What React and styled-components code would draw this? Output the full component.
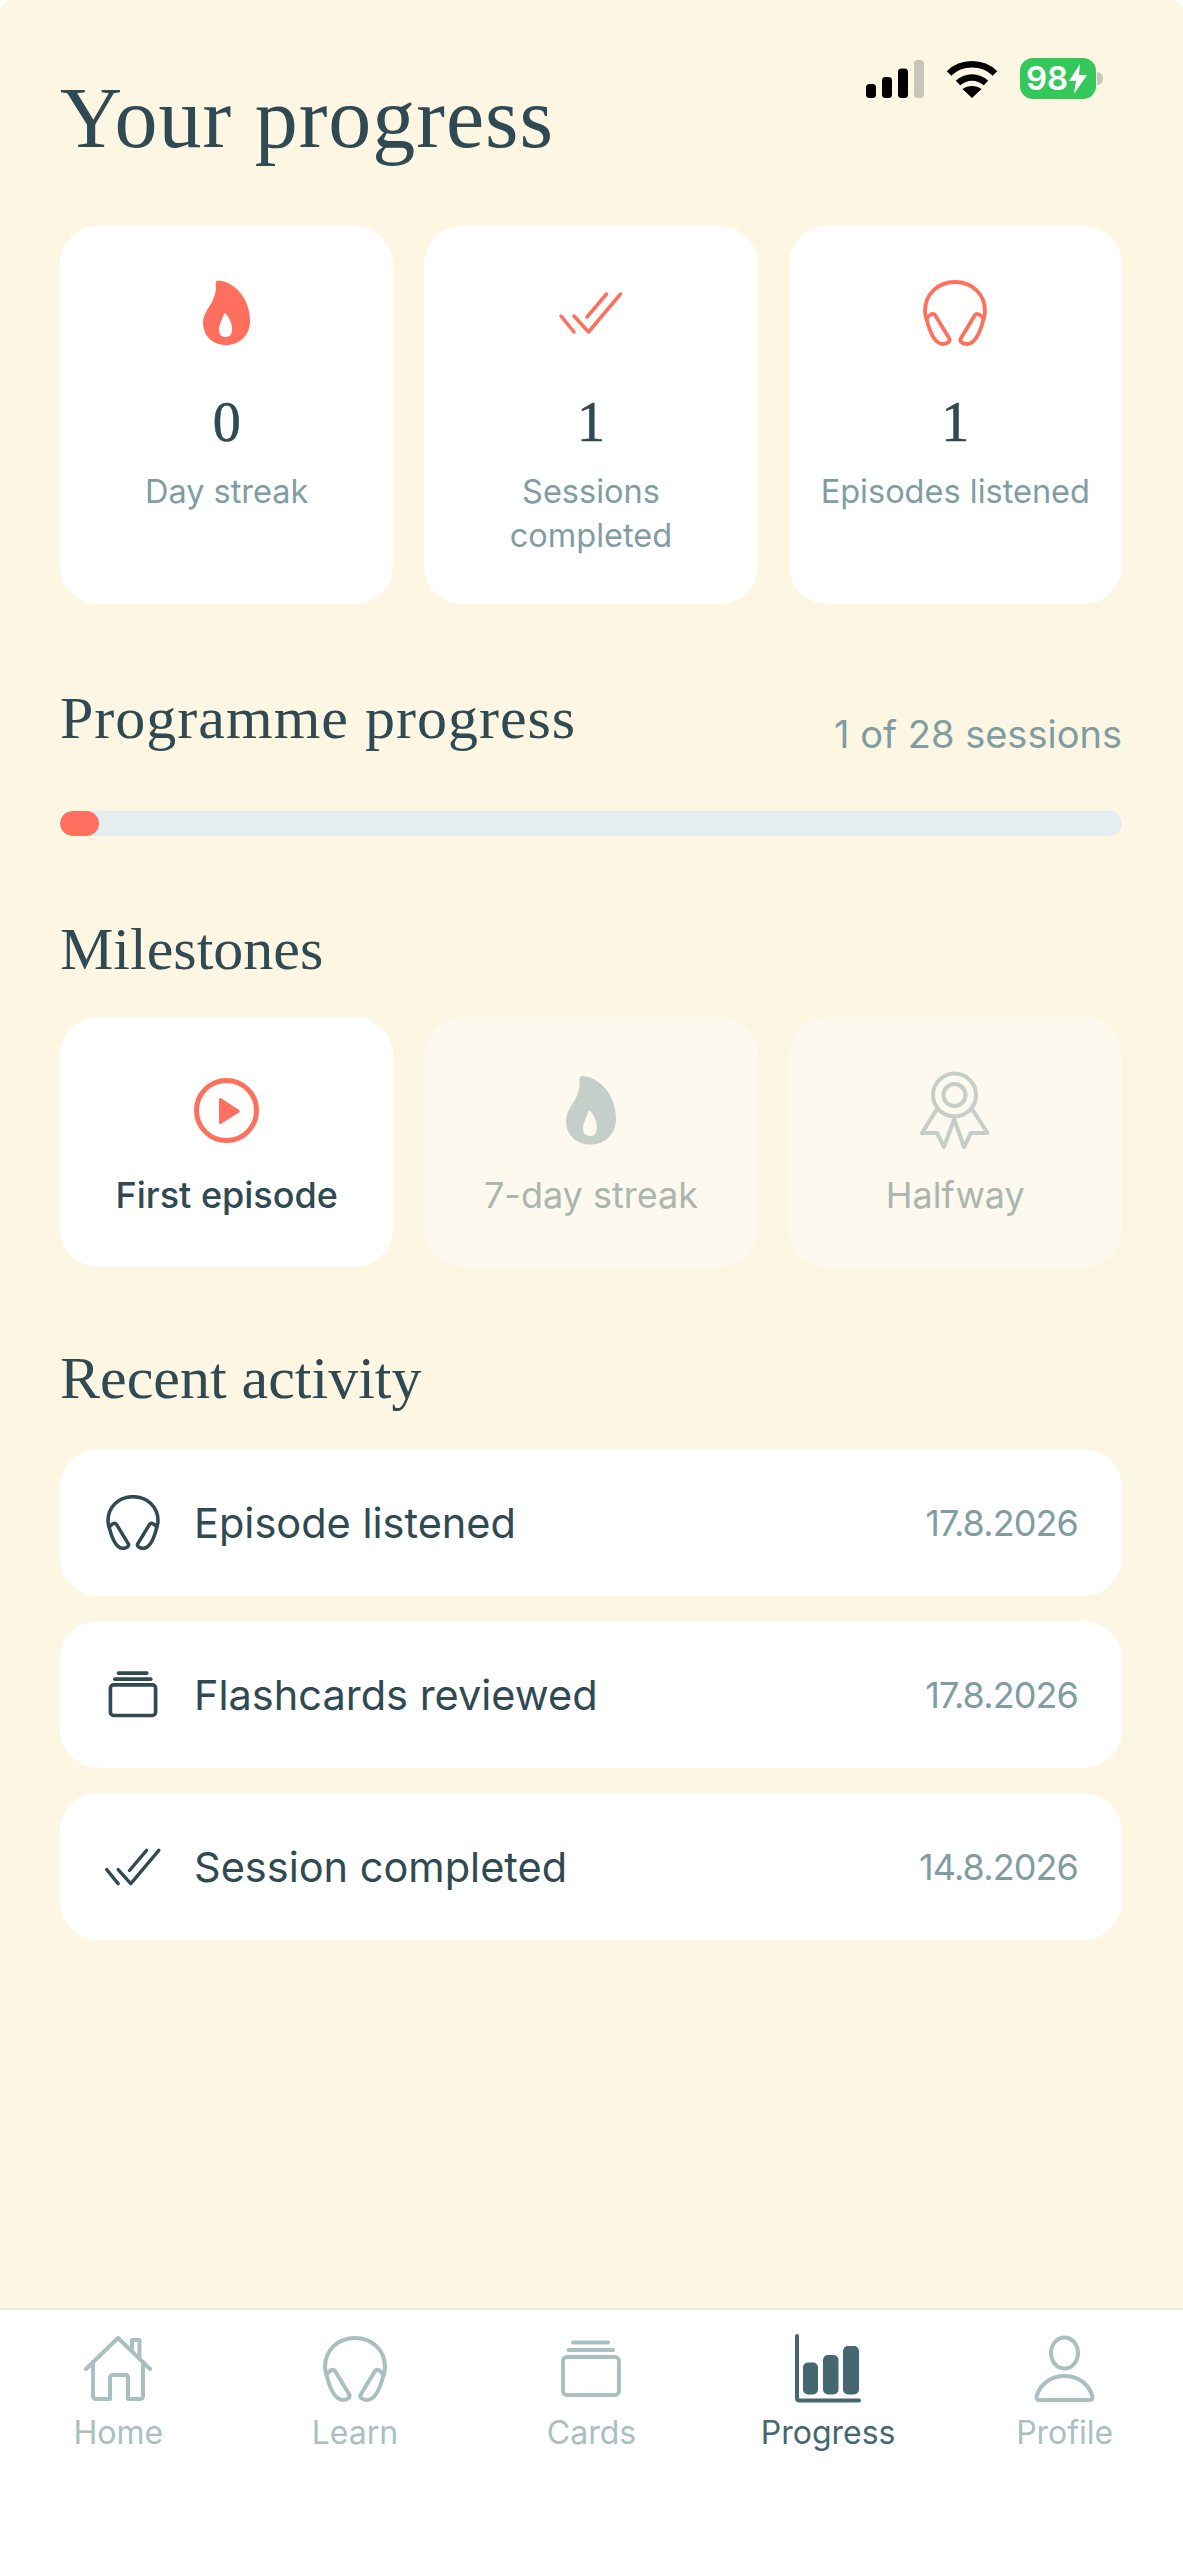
import React from "react";
import styled, { createGlobalStyle } from "styled-components";

const coral = "#FF6F5E";
const ink = "#2F4A52";
const muted = "#7F9DA3";
const navIdle = "#A9BFC2";
const navActive = "#456870";
const lockedIcon = "#C3CFC8";

const serif = `"Liberation Serif", "Times New Roman", serif`;
const sans = `Inter, "Noto Sans", sans-serif`;

const Global = createGlobalStyle`
  html, body {
    margin: 0;
    padding: 0;
    background: #fff;
  }
  * {
    box-sizing: border-box;
  }
`;

const Page = styled.div`
  position: relative;
  width: 1183px;
  height: 2560px;
  display: flex;
  flex-direction: column;
  border-radius: 12px 12px 0 0;
  background: #fdf6e3;
  font-family: ${sans};
  color: ${ink};
  overflow: hidden;
`;

const StatusBar = styled.div`
  position: absolute;
  top: 58px;
  right: 87px;
  display: flex;
  align-items: center;
  gap: 23px;
`;

const Battery = styled.div`
  position: relative;
  width: 76px;
  height: 41px;
  border-radius: 13px;
  background: #34c759;
  color: #fff;
  display: flex;
  align-items: center;
  justify-content: flex-start;
  gap: 1px;
  padding-left: 6px;
  font-size: 33px;
  font-weight: 600;
  line-height: 41px;
  &::after {
    content: "";
    position: absolute;
    right: -7px;
    top: 14px;
    width: 6px;
    height: 13px;
    border-radius: 0 6px 6px 0;
    background: #c9c5b9;
  }
`;

const Main = styled.main`
  flex: 1;
  padding: 0 61px 0 60px;
`;

const Title = styled.h1`
  margin: 0;
  padding-top: 68px;
  font-family: ${serif};
  font-weight: 400;
  font-size: 86px;
  line-height: 100px;
  letter-spacing: 1px;
  color: ${ink};
`;

const CardGrid = styled.div`
  display: grid;
  grid-template-columns: repeat(3, 1fr);
  gap: 31px;
`;

const StatGrid = styled(CardGrid)`
  margin-top: 58px;
`;

const StatCard = styled.div`
  height: 378px;
  padding-top: 54px;
  border-radius: 38px;
  background: #fff;
  display: flex;
  flex-direction: column;
  align-items: center;
`;

const IconSlot = styled.div`
  height: ${p => p.$height}px;
  display: flex;
  align-items: center;
  justify-content: center;
  color: ${p => p.$color};
`;

const StatValue = styled.div`
  margin-top: 47px;
  font-family: ${serif};
  font-size: 56px;
  line-height: 60px;
  -webkit-text-stroke: 0.6px ${ink};
  color: ${ink};
`;

const StatLabel = styled.div`
  margin-top: 18px;
  width: 280px;
  text-align: center;
  font-size: 32.5px;
  line-height: 44px;
  color: ${muted};
`;

const ProgressHead = styled.div`
  margin-top: 79px;
  display: flex;
  justify-content: space-between;
  align-items: flex-end;
`;

const SectionTitle = styled.h2`
  margin: 0;
  font-family: ${serif};
  font-weight: 400;
  font-size: 60px;
  line-height: 70px;
  color: ${ink};
`;

const ProgrammeTitle = styled(SectionTitle)`
  letter-spacing: 1px;
`;

const SessionCount = styled.span`
  margin-bottom: -5px;
  font-size: 38px;
  line-height: 48px;
  color: ${muted};
`;

const Track = styled.div`
  margin-top: 58px;
  height: 25px;
  border-radius: 13px;
  background: #e4edf0;
  overflow: hidden;
`;

const Fill = styled.div`
  height: 100%;
  border-radius: 13px;
  background: ${coral};
`;

const MilestoneTitle = styled(SectionTitle)`
  margin-top: 78px;
`;

const MilestoneGrid = styled(CardGrid)`
  margin-top: 33px;
`;

const MilestoneCard = styled.div`
  height: 250px;
  padding-top: 58px;
  border-radius: 38px;
  background: ${p => (p.$locked ? "#fdf9ee" : "#fff")};
  display: flex;
  flex-direction: column;
  align-items: center;
`;

const MilestoneLabel = styled.div`
  margin-top: 28px;
  font-size: 36px;
  line-height: 44px;
  font-weight: ${p => (p.$locked ? 400 : 500)};
  color: ${p => (p.$locked ? "#aab6ae" : ink)};
`;

const ActivityTitle = styled(SectionTitle)`
  margin-top: 76px;
`;

const ActivityList = styled.div`
  margin-top: 36px;
  display: flex;
  flex-direction: column;
  gap: 25px;
`;

const ActivityRow = styled.div`
  height: 147px;
  padding: 0 44px 0 45px;
  border-radius: 38px;
  background: #fff;
  display: flex;
  align-items: center;
`;

const ActivityIcon = styled.div`
  width: 56px;
  margin-right: 33px;
  display: flex;
  justify-content: center;
  color: ${ink};
`;

const ActivityName = styled.span`
  flex: 1;
  font-size: 41.5px;
  color: ${ink};
`;

const ActivityDate = styled.span`
  font-size: 36px;
  letter-spacing: -0.9px;
  color: ${muted};
`;

const Nav = styled.nav`
  height: 252px;
  padding-top: 25px;
  border-top: 2px solid #e9e9e6;
  background: #fff;
  display: grid;
  grid-template-columns: repeat(5, 1fr);
`;

const NavItem = styled.div`
  display: flex;
  flex-direction: column;
  align-items: center;
  color: ${p => (p.$active ? navActive : navIdle)};
`;

const NavIcon = styled.div`
  height: 68px;
  display: flex;
  align-items: center;
  justify-content: center;
`;

const NavLabel = styled.span`
  margin-top: 8px;
  font-size: 32px;
  line-height: 44px;
`;

const Flame = ({ w = 47, h = 65 }) => (
  <svg width={w} height={h} viewBox="0 0 47 65">
    <path
      fill="currentColor"
      fillRule="evenodd"
      d="M15 .5c-2 0-2.500 2-2.200 4.500.5 6-1 11-3.800 17C5 29 0 35 0 43c0 12 9 22 23 22s24-10 24-24c0-8-2-16-6-23C36 9 25 .5 15 .5ZM21 34c-2 6-5 11-5 16 0 5 3 7 7 7s6-3 6-8c0-6-3-12-6-15-1-1-2-1-2 0Z"
    />
  </svg>
);

const DoubleCheck = ({ w = 64, h = 42, sw = 3.5 }) => (
  <svg width={w} height={h} viewBox="0 0 64 42" fill="none" stroke="currentColor" strokeWidth={sw} strokeLinecap="round" strokeLinejoin="round">
    <path d="M2 24 15 40" />
    <path d="M15 24 29.500 40 61.500 2" />
    <path d="M28 25 47.500 2" />
  </svg>
);

const Headphones = ({ w = 64, h = 66, sw = 3.8 }) => (
  <svg width={w} height={h} viewBox="0 0 64 66" fill="none" stroke="currentColor" strokeWidth={sw} strokeLinecap="round" strokeLinejoin="round">
    <path d="M3.500 39C2.500 36 2 33 2 31 2 14 15 2 32 2s30 12 30 29c0 2-.5 5-1.500 8" />
    <path d="M3.500 39c1.500-3 6-7 8.500-4l14 23c2 3-1 6-6 6-8 0-13-11-16.500-25Z" />
    <path d="M60.500 39c-1.500-3-6-7-8.500-4L38 58c-2 3 1 6 6 6 8 0 13-11 16.500-25Z" />
  </svg>
);

const CardStack = ({ w = 62, h = 58, sw = 4 }) => (
  <svg width={w} height={h} viewBox="0 0 62 58" fill="none" stroke="currentColor" strokeWidth={sw} strokeLinecap="round" strokeLinejoin="round">
    <path d="M13 2.500H48" />
    <path d="M8.500 10H53" />
    <rect x="3" y="17" width="56" height="38" rx="4" />
  </svg>
);

const PlayCircle = () => (
  <svg width="65" height="65" viewBox="0 0 65 65">
    <circle cx="32.500" cy="32.500" r="30" fill="none" stroke="currentColor" strokeWidth="5" />
    <path d="M25 21.500c0-1.500 1.500-2 2.500-1l17.500 11.500c1 .7 1 1.800 0 2.500L27.500 45.500c-1 1-2.500.5-2.500-1Z" fill="currentColor" />
  </svg>
);

const Ribbon = () => (
  <svg width="72" height="80" viewBox="0 0 72 80" fill="none" stroke="currentColor" strokeWidth="4" strokeLinecap="round" strokeLinejoin="round">
    <circle cx="35.500" cy="25" r="21.500" />
    <circle cx="35.500" cy="25" r="11" />
    <path d="M18 39 3 63H18L25 77 35.500 48" />
    <path d="M53 39 68.500 63H52L45 77 35.500 50" />
  </svg>
);

const HomeIcon = () => (
  <svg width="68" height="66" viewBox="0 0 68 66" fill="none" stroke="currentColor" strokeWidth="4" strokeLinecap="round" strokeLinejoin="round">
    <path d="M2 33 34 2 66 33" />
    <path d="M9 26V60c0 1.500 1 3 3 3H26V42c0-2 1-3 3-3H41c2 0 3 1 3 3V63H56c2 0 3-1.500 3-3V26" />
    <path d="M48 13V4H55.500V22" />
  </svg>
);

const ChartIcon = () => (
  <svg width="70" height="72" viewBox="0 0 70 72">
    <path d="M4 3V65c0 1.500 1 2.500 2.500 2.500H66" fill="none" stroke="currentColor" strokeWidth="4" strokeLinecap="round" />
    <rect x="10" y="29.500" width="15" height="32" rx="5" fill="currentColor" />
    <rect x="30" y="22" width="15.500" height="39.500" rx="5" fill="currentColor" />
    <rect x="50" y="13" width="16" height="48.500" rx="5" fill="currentColor" />
  </svg>
);

const ProfileIcon = () => (
  <svg width="63" height="68" viewBox="0 0 63 68" fill="none" stroke="currentColor" strokeWidth="4" strokeLinejoin="round">
    <ellipse cx="31.500" cy="18" rx="13.500" ry="15.500" />
    <path d="M6 65C3.500 65 3 62.500 4 60 8 48 19 41 31.500 41S55 48 59 60C60 62.500 59.500 65 57 65Z" />
  </svg>
);

const SignalIcon = () => (
  <svg width="58" height="38" viewBox="0 0 58 38">
    <rect x="0" y="24" width="10" height="14" rx="3.500" fill="#000" />
    <rect x="16" y="17" width="10" height="21" rx="3.500" fill="#000" />
    <rect x="32" y="8.500" width="10" height="29.500" rx="3.500" fill="#000" />
    <rect x="48" y="0" width="10" height="38" rx="3.500" fill="#c9c5b9" />
  </svg>
);

const WifiIcon = () => (
  <svg width="50" height="38" viewBox="0 0 50 38" fill="none" stroke="#000" strokeWidth="6.500">
    <path d="M2 13.500C14 1 36 1 48 13.500" />
    <path d="M11 23C19 15.500 31 15.500 39 23" />
    <path d="M25 38 15.500 29C21 25 29 25 34.500 29Z" fill="#000" stroke="none" />
  </svg>
);

const BoltIcon = () => (
  <svg width="18" height="30" viewBox="0 0 18 30">
    <path d="M11 0 0 17H7L5 30 18 11H10Z" fill="#fff" />
  </svg>
);

const stats = [
  { icon: <Flame />, value: "0", label: "Day streak" },
  { icon: <DoubleCheck />, value: "1", label: "Sessions completed" },
  { icon: <Headphones />, value: "1", label: "Episodes listened" },
];

const milestones = [
  { icon: <PlayCircle />, label: "First episode", color: coral },
  { icon: <Flame w={50} h={70} />, label: "7-day streak", color: lockedIcon, locked: true },
  { icon: <Ribbon />, label: "Halfway", color: lockedIcon, locked: true },
];

const activity = [
  { icon: <Headphones w={54} h={55} sw={4.200} />, name: "Episode listened", date: "17.8.2026" },
  { icon: <CardStack w={50} h={47} sw={4.500} />, name: "Flashcards reviewed", date: "17.8.2026" },
  { icon: <DoubleCheck w={56} h={38} sw={3.800} />, name: "Session completed", date: "14.8.2026" },
];

const tabs = [
  { icon: <HomeIcon />, label: "Home" },
  { icon: <Headphones sw={4} />, label: "Learn" },
  { icon: <CardStack />, label: "Cards" },
  { icon: <ChartIcon />, label: "Progress", active: true },
  { icon: <ProfileIcon />, label: "Profile" },
];

export default function App() {
  return (
    <Page>
      <Global />
      <StatusBar>
        <SignalIcon />
        <WifiIcon />
        <Battery>
          98
          <BoltIcon />
        </Battery>
      </StatusBar>
      <Main>
        <Title>Your progress</Title>
        <StatGrid>
          {stats.map(s => (
            <StatCard key={s.label}>
              <IconSlot $height={65} $color={coral}>{s.icon}</IconSlot>
              <StatValue>{s.value}</StatValue>
              <StatLabel>{s.label}</StatLabel>
            </StatCard>
          ))}
        </StatGrid>
        <ProgressHead>
          <ProgrammeTitle>Programme progress</ProgrammeTitle>
          <SessionCount>1 of 28 sessions</SessionCount>
        </ProgressHead>
        <Track>
          <Fill style={{ width: `${(39 / 1062) * 100}%` }} />
        </Track>
        <MilestoneTitle>Milestones</MilestoneTitle>
        <MilestoneGrid>
          {milestones.map(m => (
            <MilestoneCard key={m.label} $locked={m.locked}>
              <IconSlot $height={70} $color={m.color}>{m.icon}</IconSlot>
              <MilestoneLabel $locked={m.locked}>{m.label}</MilestoneLabel>
            </MilestoneCard>
          ))}
        </MilestoneGrid>
        <ActivityTitle>Recent activity</ActivityTitle>
        <ActivityList>
          {activity.map(a => (
            <ActivityRow key={a.name}>
              <ActivityIcon>{a.icon}</ActivityIcon>
              <ActivityName>{a.name}</ActivityName>
              <ActivityDate>{a.date}</ActivityDate>
            </ActivityRow>
          ))}
        </ActivityList>
      </Main>
      <Nav>
        {tabs.map(t => (
          <NavItem key={t.label} $active={t.active}>
            <NavIcon>{t.icon}</NavIcon>
            <NavLabel>{t.label}</NavLabel>
          </NavItem>
        ))}
      </Nav>
    </Page>
  );
}
